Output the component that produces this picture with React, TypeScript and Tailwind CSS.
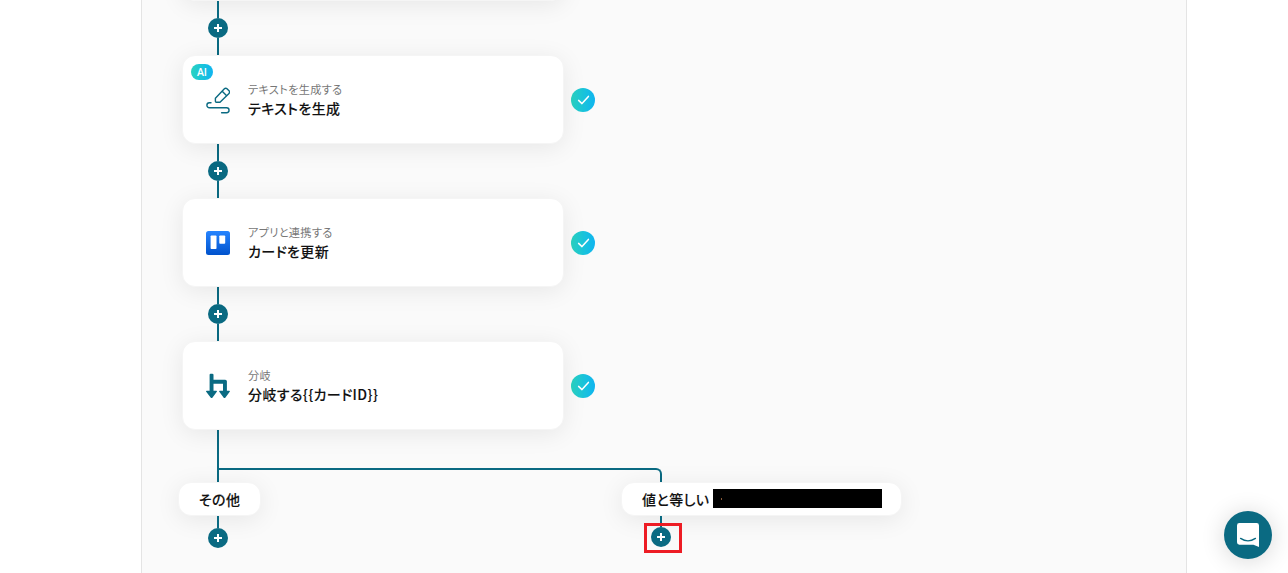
import type { ReactNode } from "react";

type Step = {
  kind: string;
  title: string;
  icon: ReactNode;
  ai?: boolean;
};

function WriteIcon() {
  return (
    <svg viewBox="0 0 24 28" fill="none" stroke="#0a6a82" strokeWidth="1.4" className="h-7 w-6">
      <path d="M9.4 12.3 18.4 2.8a1.8 1.8 0 0 1 2.6 0l2 2a1.8 1.8 0 0 1 0 2.6L14 16.2h-3.6a1 1 0 0 1-1-1Z" strokeLinejoin="round" />
      <path d="m16.2 5.3 4.500 4.500" />
      <path d="M5 16.8H3.400a2.500 2.500 0 0 0 0 5h17.200a2.400 2.400 0 0 1 0 4.900h-5" strokeLinecap="round" />
    </svg>
  );
}

function BoardIcon() {
  return (
    <svg viewBox="0 0 24 24" className="h-6 w-6">
      <defs>
        <linearGradient id="board" x1="0" y1="0" x2="0" y2="1">
          <stop offset="0" stopColor="#2684ff" />
          <stop offset="1" stopColor="#0052cc" />
        </linearGradient>
      </defs>
      <rect width="24" height="24" rx="2.5" fill="url(#board)" />
      <rect x="4.6" y="4.5" width="5.9" height="13.5" rx="0.8" fill="#fff" />
      <rect x="13.3" y="4.5" width="5.9" height="8.2" rx="0.8" fill="#fff" />
    </svg>
  );
}

function BranchIcon() {
  return (
    <svg viewBox="0 0 24 26" fill="#0a6a82" className="h-[26px] w-6">
      <path d="M4.400.8h1.800q1.300 0 1.300 1V6.800h11.700q1.700 0 1.700 1.500v9.400h2.400q1 .2.400 1l-4.400 6q-.8.8-1.600 0l-4.400-6q-.5-.8.400-1h3.300v-7H7.500v7H10.400q.9.200.400 1l-4.400 6q-.8.8-1.600 0l-4.600-6q-.5-.8.400-1h3V1.800q0-1 1-1Z" />
    </svg>
  );
}

const steps: Step[] = [
  { kind: "テキストを生成する", title: "テキストを生成", icon: <WriteIcon />, ai: true },
  { kind: "アプリと連携する", title: "カードを更新", icon: <BoardIcon /> },
  { kind: "分岐", title: "分岐する{{カードID}}", icon: <BranchIcon /> },
];

function AddButton() {
  return (
    <button className="flex h-5 w-5 shrink-0 items-center justify-center rounded-full bg-[#0a6a82]" aria-label="追加">
      <svg viewBox="0 0 8 8" stroke="#fff" strokeWidth="2" className="h-2 w-2">
        <path d="M4 0v8M0 4h8" />
      </svg>
    </button>
  );
}

function Connector() {
  return (
    <div className="ml-[26px] flex h-[54px] w-5 flex-col items-center">
      <span className="h-[17px] w-0.5 bg-[#0a6a82]" />
      <AddButton />
      <span className="w-0.5 flex-1 bg-[#0a6a82]" />
    </div>
  );
}

function CheckBadge() {
  return (
    <span className="flex h-6 w-6 items-center justify-center rounded-full bg-linear-to-r from-[#2bd3c0] to-[#10b4f0]">
      <svg viewBox="0 0 24 24" fill="none" stroke="#fff" strokeWidth="1.5" strokeLinecap="round" strokeLinejoin="round" className="h-6 w-6">
        <path d="m7.600 12.400 3.400 3.200 6.400-7.200" />
      </svg>
    </span>
  );
}

function StepCard({ step }: { step: Step }) {
  return (
    <div className="flex items-center gap-[7px]">
      <div className="relative flex h-[89px] w-[382px] items-center rounded-[13px] border border-[#f5f5f5] bg-white pl-[23px] shadow-[0_4px_24px_rgba(0,0,0,0.08)]">
        {step.ai && (
          <span className="absolute left-2 top-2 flex h-4 w-[22px] items-center justify-center rounded-full bg-linear-to-r from-[#2bd3c0] to-[#10b4f0] font-['Open_Sans'] text-[10.5px] font-semibold leading-none text-white">
            AI
          </span>
        )}
        <span className="flex w-6 justify-center">{step.icon}</span>
        <div className="mb-0.5 ml-[18px]">
          <p className="text-[11.2px] leading-[18px] tracking-wide text-[#777]">{step.kind}</p>
          <p className="text-[14px] font-medium leading-5 tracking-[0.4px] text-[#111] [-webkit-text-stroke:0.1px]">{step.title}</p>
        </div>
      </div>
      <CheckBadge />
    </div>
  );
}

function Pill({ label, children }: { label: string; children?: ReactNode }) {
  return (
    <div className="flex h-[34px] items-center rounded-[13px] border border-[#f5f5f5] bg-white pl-5 shadow-[0_4px_24px_rgba(0,0,0,0.08)]">
      <span className="-mt-px w-[71px] whitespace-nowrap text-[14px] font-medium leading-5 tracking-[0.4px] text-[#111] [-webkit-text-stroke:0.1px]">
        {label}
      </span>
      {children}
    </div>
  );
}

export default function App() {
  return (
    <div className="relative h-[573px] w-full overflow-hidden bg-white [font-family:'Noto_Sans_CJK_JP',sans-serif] [font-feature-settings:'palt']">
      <main className="ml-[141px] h-[573px] w-[1046px] overflow-hidden border-x border-[#e4e4e4] bg-[#fafafa] pl-10">
        <div className="-mt-[88px] h-[89px] w-[382px] rounded-[13px] border border-[#f5f5f5] bg-white shadow-[0_4px_24px_rgba(0,0,0,0.08)]" />
        {steps.map((step) => (
          <div key={step.title}>
            <Connector />
            <StepCard step={step} />
          </div>
        ))}

        <div className="ml-[35px] flex h-[52px] w-[445px] items-end border-l-2 border-[#0a6a82]">
          <div className="h-3.5 w-full rounded-tr-[6px] border-r-2 border-t-2 border-[#0a6a82]" />
        </div>

        <div className="-ml-1 flex items-start gap-[360px]">
          <div className="w-[83px]">
            <Pill label="その他" />
            <div className="ml-[30px] flex w-5 flex-col items-center">
              <span className="h-3 w-0.5 bg-[#0a6a82]" />
              <AddButton />
            </div>
          </div>
          <div className="w-[281px]">
            <Pill label="値と等しい">
              <span className="-mt-[1px] flex h-[19px] w-[169px] items-center bg-black pl-2">
                <i className="h-0.5 w-px bg-[#8a5b3a]" />
              </span>
            </Pill>
            <div className="relative ml-[30px] flex w-5 flex-col items-center">
              <span className="h-[11px] w-0.5 bg-[#0a6a82]" />
              <AddButton />
              <span className="absolute -left-[7px] top-[7px] h-[30px] w-[38px] border-3 border-[#ed1c24]" />
            </div>
          </div>
        </div>
      </main>

      <button className="absolute left-[1224px] top-[511px] flex h-12 w-12 items-center justify-center rounded-full bg-[#0a6a82] shadow-[0_2px_24px_rgba(0,0,0,0.16)]" aria-label="チャット">
        <svg viewBox="0 0 22 24" className="h-6 w-[22px]">
          <path d="M2.400 0h17.200Q22 0 22 2.400V24l-5.600-2.300H2.400Q0 21.700 0 19.300V2.400Q0 0 2.400 0Z" fill="#fff" />
          <path d="M3.600 15.400q7.400 5 14.800 0" fill="none" stroke="#0a6a82" strokeWidth="1.400" strokeLinecap="round" />
        </svg>
      </button>
    </div>
  );
}
